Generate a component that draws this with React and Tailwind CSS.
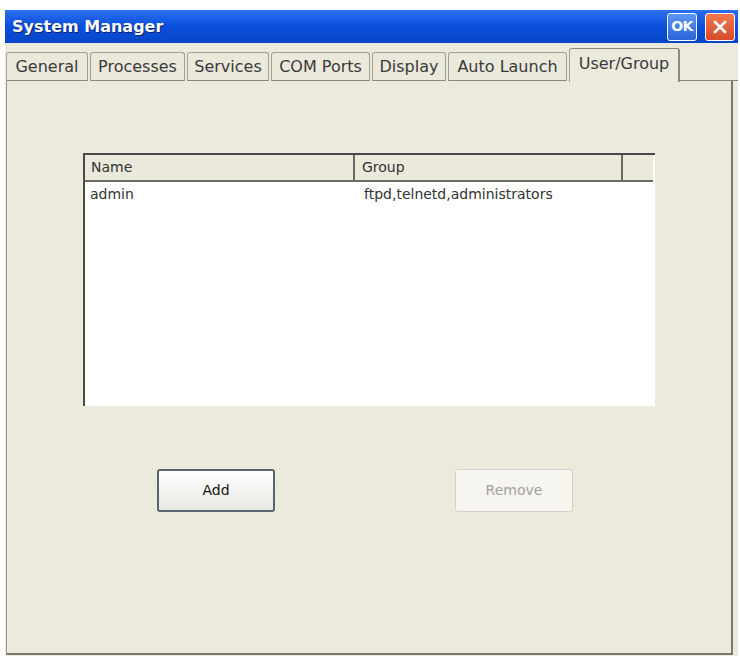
import React from "react";

const tabs = [
  { label: "General", w: "w-[82px]" },
  { label: "Processes", w: "w-[95px]" },
  { label: "Services", w: "w-[82px]" },
  { label: "COM Ports", w: "w-[99px]" },
  { label: "Display", w: "w-[74px]" },
  { label: "Auto Launch", w: "w-[119px]" },
];

const users = [{ name: "admin", group: "ftpd,telnetd,administrators" }];

const App = () => {
  return (
    <div className="w-[740px] h-[659px] bg-white pl-[5px] pt-[10px] font-['DejaVu_Sans',Tahoma,sans-serif]">
      <div className="w-[733px] h-[646px] flex flex-col bg-[#ece9dd]">
        {/* Title bar */}
        <div className="h-[33px] flex items-center justify-between pl-[7px] pr-[3px] bg-gradient-to-b from-[#2a6ef0] via-[#0a4fdc] to-[#0846c8]">
          <span className="text-[16px] font-bold text-white [text-shadow:1px_1px_0_#0a1f6a]">
            System Manager
          </span>
          <div className="flex items-center gap-[8px]">
            <button className="w-[30px] h-[28px] flex items-center justify-center rounded-[3px] border border-white bg-gradient-to-b from-[#5b95f5] to-[#2a64d8] text-white text-[14px] font-bold tracking-[-0.5px]">
              OK
            </button>
            <button className="w-[30px] h-[28px] flex items-center justify-center rounded-[3px] border border-white bg-gradient-to-b from-[#f07a50] to-[#d8482a] text-white">
              <svg width="14" height="14" viewBox="0 0 14 14">
                <path d="M2 2L12 12M12 2L2 12" stroke="white" strokeWidth="2.6" strokeLinecap="square" />
              </svg>
            </button>
          </div>
        </div>

        {/* Tabs */}
        <div className="h-[38px] flex items-end pl-[1px] pt-[5px]">
          {tabs.map((t) => (
            <div
              key={t.label}
              className={`${t.w} h-[29px] mr-[2px] flex items-center justify-center border-t border-l border-r border-[#a3a196] border-b border-b-[#8c8a80] rounded-t-[3px] bg-[#ebe8dc] text-[16px] text-[#3a3a3a] whitespace-nowrap`}
            >
              {t.label}
            </div>
          ))}
          <div className="w-[111px] h-[34px] -mb-[1px] pb-[4px] flex items-center justify-center border-t border-l border-r-2 border-[#8c8a80] border-l-[#a3a196] rounded-t-[3px] bg-[#ece9dd] text-[16px] text-[#3a3a3a] whitespace-nowrap relative z-10">
            User/Group
          </div>
          <div className="flex-1 h-full border-b border-[#8c8a80]" />
        </div>

        {/* Panel */}
        <div className="flex-1 mr-[5px] ml-[1px] mb-[1px] border-l border-r-2 border-b-2 border-[#7a7870] border-l-[#9a988e] flex flex-col pt-[72px]">
          <div className="ml-[76px] w-[572px] h-[253px] bg-white border-t-2 border-l-2 border-[#4a4a4a] flex flex-col">
            <div className="h-[27px] w-[568px] flex bg-[#ebe8dc] border-b-2 border-[#6a6a66] text-[14px] text-[#333]">
              <div className="w-[270px] pl-[6px] flex items-center border-r-2 border-[#6a6a66]">Name</div>
              <div className="w-[268px] pl-[7px] flex items-center border-r-2 border-[#6a6a66]">Group</div>
              <div className="flex-1" />
            </div>
            {users.map((u) => (
              <div key={u.name} className="h-[24px] flex items-center text-[14px] text-[#333]">
                <div className="w-[270px] pl-[5px]">{u.name}</div>
                <div className="pl-[9px]">{u.group}</div>
              </div>
            ))}
          </div>

          <div className="flex mt-[63px] pl-[150px] gap-[180px]">
            <button className="w-[118px] h-[43px] rounded-[3px] border-2 border-[#5a6470] bg-gradient-to-b from-[#ffffff] to-[#e8e8e2] text-[14px] text-[#111]">
              Add
            </button>
            <button className="w-[118px] h-[43px] rounded-[3px] border border-[#d4d2c8] bg-[#f6f5f0] text-[14px] text-[#a2a29c]">
              Remove
            </button>
          </div>
        </div>
      </div>
    </div>
  );
};

export default App;
